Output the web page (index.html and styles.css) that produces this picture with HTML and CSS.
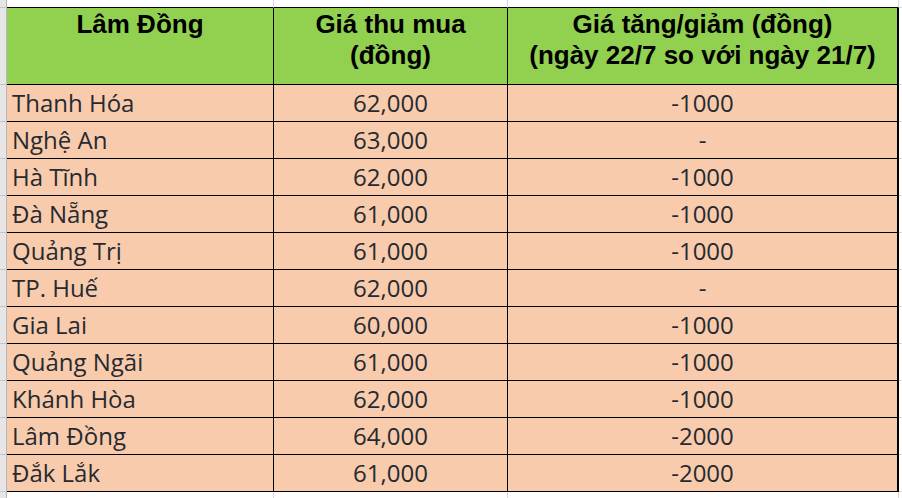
FILE: index.html
```html
<!DOCTYPE html>
<html lang="vi">
<head>
<meta charset="utf-8">
<title>Giá thu mua - Lâm Đồng</title>
<link rel="stylesheet" href="styles.css">
</head>
<body>
<div class="sheet">
  <div class="g"></div><div class="top"></div><div class="top"></div><div class="top"></div><div class="x"></div>

  <div class="g"></div>
  <div class="h">Lâm Đồng</div>
  <div class="h">Giá thu mua<br>(đồng)</div>
  <div class="h last">Giá tăng/giảm (đồng)<br>(ngày 22/7 so với ngày 21/7)</div>
  <div class="x"></div>

  <div class="g"></div><div class="c name">Thanh Hóa</div><div class="c">62,000</div><div class="c last">-1000</div><div class="x"></div>
  <div class="g"></div><div class="c name">Nghệ An</div><div class="c">63,000</div><div class="c last">-</div><div class="x"></div>
  <div class="g"></div><div class="c name">Hà Tĩnh</div><div class="c">62,000</div><div class="c last">-1000</div><div class="x"></div>
  <div class="g"></div><div class="c name">Đà Nẵng</div><div class="c">61,000</div><div class="c last">-1000</div><div class="x"></div>
  <div class="g"></div><div class="c name">Quảng Trị</div><div class="c">61,000</div><div class="c last">-1000</div><div class="x"></div>
  <div class="g"></div><div class="c name">TP. Huế</div><div class="c">62,000</div><div class="c last">-</div><div class="x"></div>
  <div class="g"></div><div class="c name">Gia Lai</div><div class="c">60,000</div><div class="c last">-1000</div><div class="x"></div>
  <div class="g"></div><div class="c name">Quảng Ngãi</div><div class="c">61,000</div><div class="c last">-1000</div><div class="x"></div>
  <div class="g"></div><div class="c name">Khánh Hòa</div><div class="c">62,000</div><div class="c last">-1000</div><div class="x"></div>
  <div class="g"></div><div class="c name">Lâm Đồng</div><div class="c">64,000</div><div class="c last">-2000</div><div class="x"></div>
  <div class="g"></div><div class="c name">Đắk Lắk</div><div class="c">61,000</div><div class="c last">-2000</div><div class="x"></div>

  <div class="g end"></div><div class="bot"></div><div class="bot"></div><div class="bot"></div><div class="x end"></div>
</div>
</body>
</html>
```

FILE: styles.css
```css
* { box-sizing: border-box; }
html, body { margin: 0; padding: 0; background: #fff; }
body { width: 902px; height: 498px; overflow: hidden; }

.sheet {
  display: grid;
  grid-template-columns: 7px 267px 234px 391px 3px;
  grid-template-rows: 8px 77px repeat(11, 37px) 6px;
  width: 902px;
  height: 498px;
}

.g {
  background: #e6e6e6;
  border-right: 1px solid #b8b8b8;
  border-bottom: 1px solid #c4c4c4;
}
.g.end { border-bottom: none; }

.top {
  background: #fff;
  border-right: 1px solid #d9d9d9;
  border-bottom: 1px solid #000;
}
.bot {
  background: #fff;
  border-right: 1px solid #d9d9d9;
}
.x {
  background: #fff;
  border-bottom: 1px solid #d9d9d9;
}
.x.end { border-bottom: none; }

.h {
  background: #92d050;
  border-right: 1px solid #000;
  border-bottom: 1px solid #000;
  font-family: "Liberation Sans", Arial, sans-serif;
  font-weight: bold;
  font-size: 26px;
  line-height: 31px;
  color: #000;
  text-align: center;
  padding-top: 1px;
  white-space: nowrap;
}

.c {
  background: #f8cbad;
  border-right: 1px solid #000;
  border-bottom: 1px solid #000;
  font-family: "Open Sans", "Noto Sans", sans-serif;
  font-size: 24px;
  line-height: 35px;
  color: #262a30;
  text-align: center;
  white-space: nowrap;
}
.c.name { text-align: left; padding-left: 5px; }

.last { border-right: 2px solid #000; }
```
